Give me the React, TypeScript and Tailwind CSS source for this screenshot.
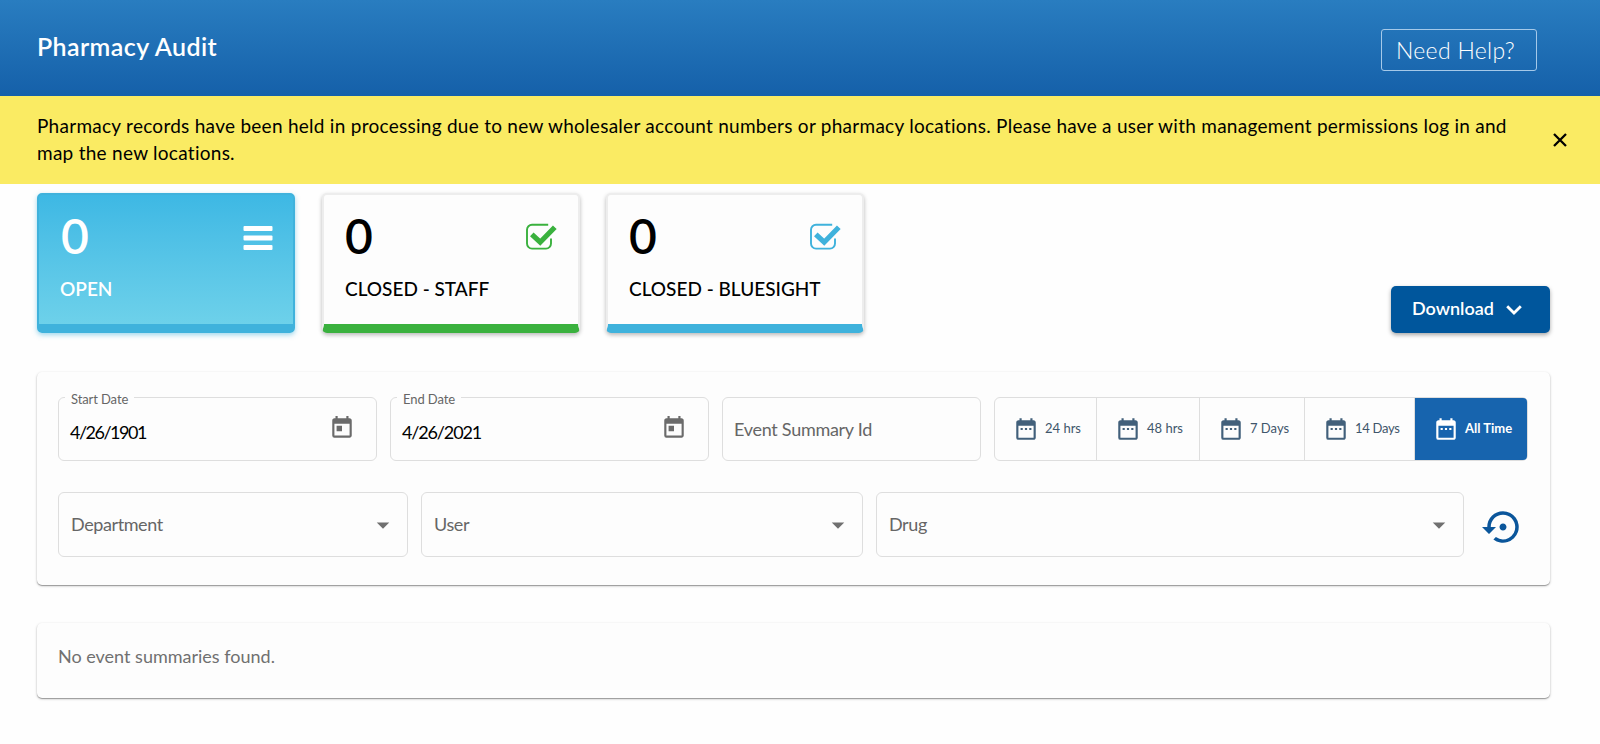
import type { ReactNode } from "react";
import { MdArrowDropDown, MdDateRange, MdSettingsBackupRestore, MdToday } from "react-icons/md";

const RANGES = [
  { label: "24 hrs", width: "w-[102px]" },
  { label: "48 hrs", width: "w-[103px]" },
  { label: "7 Days", width: "w-[105px]" },
  { label: "14 Days", width: "w-[110px] tracking-[-0.3px]" },
];

function MenuIcon() {
  return (
    <svg viewBox="0 0 30 26" className="mr-5 mt-[31px] h-[26px] w-[30px] shrink-0" fill="currentColor">
      <rect x="0.5" y="0" width="29" height="5" rx="1" />
      <rect x="0.5" y="9.5" width="29" height="5" rx="1" />
      <rect x="0.5" y="19" width="29" height="5" rx="1" />
    </svg>
  );
}

function CheckIcon({ className }: { className: string }) {
  return (
    <svg viewBox="0 0 32 28" className={`mr-[21px] mt-[28px] h-7 w-8 shrink-0 ${className}`} fill="none" stroke="currentColor">
      <path d="M23.2 1.8H7A5 5 0 0 0 2 6.8V20.6A5 5 0 0 0 7 25.6H21A5 5 0 0 0 26 20.6V15.5" strokeWidth="1.900" />
      <path d="M6.8 11.3L15.2 19.2L29.8 4.3" strokeWidth="5.200" />
    </svg>
  );
}

function StatCard({ label, bar, icon }: { label: string; bar: string; icon: ReactNode }) {
  return (
    <div
      className={`flex h-[140px] w-[258px] rounded-[5px] border-2 border-b-[9px] border-[#ededed] bg-[#fdfdfd] shadow-[0_2px_4px_rgba(0,0,0,0.28)] ${bar}`}
    >
      <div className="min-w-0 flex-1 pl-[21px] pt-[16px]">
        <div className="text-[48px] font-semibold leading-[50px]">0</div>
        <div className="mt-[16px] whitespace-nowrap text-[19px] font-medium leading-6">{label}</div>
      </div>
      {icon}
    </div>
  );
}

function DateField({ label, value, tracking }: { label: string; value: string; tracking: string }) {
  return (
    <div className="relative flex h-[64px] w-[319px] items-center justify-between rounded-md border border-[#dedede] pl-[11px] pr-[21px]">
      <span className="absolute -top-[7px] left-[6px] bg-[#fdfdfd] px-[6px] text-[13px] leading-4 tracking-[-0.1px] text-[#666]">{label}</span>
      <span className={`pt-[5px] text-[18px] leading-6 ${tracking}`}>{value}</span>
      <MdToday className="mb-[3px] size-[26px] text-[#6b6b6b]" />
    </div>
  );
}

function SelectField({ label, width }: { label: string; width: string }) {
  return (
    <div className={`flex h-[65px] items-center justify-between rounded-md border border-[#dedede] pl-3 pr-[9px] text-[18px] tracking-[-0.4px] text-[#666] ${width}`}>
      <span>{label}</span>
      <MdArrowDropDown className="size-[30px] text-[#707070]" />
    </div>
  );
}

export default function App() {
  return (
    <div className="h-[744px] w-[1600px] overflow-hidden bg-[#fefefe] font-['Lato','Liberation_Sans',sans-serif] text-black">
      <header className="flex h-24 items-start justify-between bg-linear-to-b from-[#297dc0] to-[#1560a9] pl-[37px] pr-[63px] text-white">
        <h1 className="mt-[30px] text-[25px] font-semibold leading-8 tracking-[0.4px]">Pharmacy Audit</h1>
        <button className="mt-[29px] h-[42px] w-[156px] rounded-[3px] border border-[#a5c9e9] pl-[14px] text-left text-[23px] font-light tracking-[0.3px]">
          Need Help?
        </button>
      </header>

      <div className="flex h-[88px] items-center bg-[#faeb63] pl-[37px] pr-[33px]">
        <p className="mt-[-2px] w-[1500px] whitespace-nowrap text-[19px] leading-[27px] tracking-[0.27px]">
          Pharmacy records have been held in processing due to new wholesaler account numbers or pharmacy locations. Please have a user with management permissions log in and
          <br />
          map the new locations.
        </p>
        <svg viewBox="0 0 14 14" className="ml-auto mt-[-1px] size-[14px] shrink-0" stroke="currentColor" strokeWidth="2.300">
          <path d="M1 1L13 13M13 1L1 13" />
        </svg>
      </div>

      <main className="pl-[37px] pr-[50px]">
        <div className="flex items-end justify-between pt-[9px]">
          <div className="flex gap-[27px]">
            <div className="flex h-[140px] w-[258px] justify-between rounded-[5px] border-2 border-b-[9px] border-[#3fb2dc] bg-linear-to-b from-[#3db8e4] to-[#6dd1ea] text-white shadow-[0_2px_5px_rgba(63,178,220,0.5)]">
              <div className="pl-[21px] pt-[16px]">
                <div className="pl-px text-[48px] font-semibold leading-[50px]">0</div>
                <div className="mt-[16px] text-[19px] font-semibold leading-6">OPEN</div>
              </div>
              <MenuIcon />
            </div>
            <StatCard label="CLOSED - STAFF" bar="border-b-[#3ab13e]" icon={<CheckIcon className="text-[#3ab13e]" />} />
            <div className="-ml-px">
              <StatCard label="CLOSED - BLUESIGHT" bar="border-b-[#3fb2dc]" icon={<CheckIcon className="text-[#3fb2dc]" />} />
            </div>
          </div>
          <button className="flex h-[47px] w-[159px] items-center rounded-[5px] bg-[#00569c] pb-[3px] pl-[21px] text-[18px] font-semibold text-white shadow-[0_2px_4px_rgba(0,0,0,0.35)]">
            Download
            <svg viewBox="0 0 16 10" className="ml-[12px] mt-1 h-[10px] w-4" fill="none" stroke="currentColor" strokeWidth="2.800">
              <path d="M1.2 1.2L8 8L14.8 1.2" />
            </svg>
          </button>
        </div>

        <section className="mt-[39px] h-[213px] rounded-[5px] bg-[#fdfdfd] px-[21px] pt-[25px] shadow-[0_1px_3px_rgba(0,0,0,0.2),0_1px_1px_rgba(0,0,0,0.3)]">
          <div className="flex gap-[13px]">
            <DateField label="Start Date" value="4/26/1901" tracking="tracking-[-1.5px]" />
            <DateField label="End Date" value="4/26/2021" tracking="tracking-[-1.15px]" />
            <div className="flex h-[64px] w-[259px] items-center rounded-md border border-[#dedede] pl-[11px] text-[18px] tracking-[-0.28px] text-[#666]">
              Event Summary Id
            </div>
            <div className="flex h-[64px] rounded-md border border-[#dedede]">
              {RANGES.map((r) => (
                <button
                  key={r.label}
                  className={`flex items-center border-r border-[#dedede] pb-px pl-[18px] text-[13px] text-[#3f566b] last:border-0 ${r.width}`}
                >
                  <MdDateRange className="mr-[6px] size-[26px] text-[#42607b]" />
                  {r.label}
                </button>
              ))}
              <button className="flex w-[112px] items-center rounded-r-[4px] bg-[#1764ae] pb-px pl-[18px] text-[13px] font-bold text-white">
                <MdDateRange className="mr-[6px] size-[26px]" />
                All Time
              </button>
            </div>
          </div>
          <div className="mt-[31px] flex items-center">
            <SelectField label="Department" width="w-[350px]" />
            <SelectField label="User" width="ml-[13px] w-[442px]" />
            <SelectField label="Drug" width="ml-[13px] w-[588px]" />
            <MdSettingsBackupRestore className="ml-[18px] mt-1 size-[42px] text-[#0b569b]" />
          </div>
        </section>

        <section className="mt-[38px] h-[75px] rounded-[5px] bg-[#fdfdfd] px-[21px] pt-[21px] text-[18px] leading-6 text-[#707070] shadow-[0_1px_3px_rgba(0,0,0,0.2),0_1px_1px_rgba(0,0,0,0.3)]">
          No event summaries found.
        </section>
      </main>
    </div>
  );
}
